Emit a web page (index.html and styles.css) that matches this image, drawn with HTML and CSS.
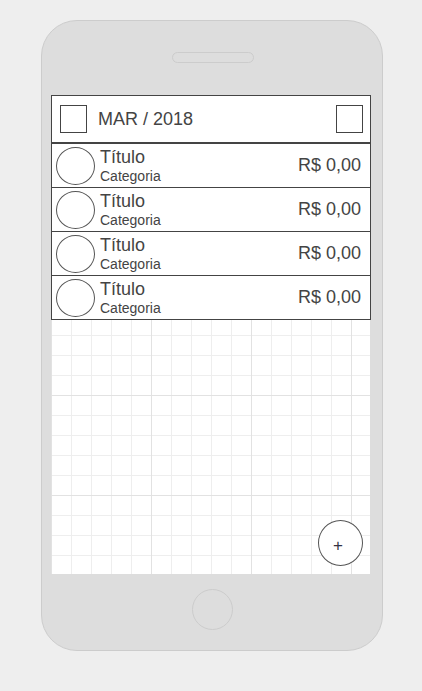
FILE: index.html
```html
<!DOCTYPE html>
<html lang="pt-BR">
<head>
<meta charset="utf-8">
<title>Finanças</title>
<link rel="stylesheet" href="styles.css">
</head>
<body>
<div class="phone">
  <div class="speaker"></div>
  <div class="screen">
    <div class="header">
      <div class="sq"></div>
      <div class="month">MAR / 2018</div>
      <div class="sq"></div>
    </div>
    <div class="list">
      <div class="row">
        <div class="avatar"></div>
        <div class="info"><div class="title">Título</div><div class="cat">Categoria</div></div>
        <div class="amount">R$ 0,00</div>
      </div>
      <div class="row">
        <div class="avatar"></div>
        <div class="info"><div class="title">Título</div><div class="cat">Categoria</div></div>
        <div class="amount">R$ 0,00</div>
      </div>
      <div class="row">
        <div class="avatar"></div>
        <div class="info"><div class="title">Título</div><div class="cat">Categoria</div></div>
        <div class="amount">R$ 0,00</div>
      </div>
      <div class="row">
        <div class="avatar"></div>
        <div class="info"><div class="title">Título</div><div class="cat">Categoria</div></div>
        <div class="amount">R$ 0,00</div>
      </div>
    </div>
    <div class="fab">+</div>
  </div>
  <div class="home"></div>
</div>
</body>
</html>
```
FILE: styles.css
```css
html, body {
  margin: 0;
  padding: 0;
}
body {
  background: #eeeeee;
  font-family: "Liberation Sans", Arial, sans-serif;
  color: #444444;
}
.phone {
  box-sizing: border-box;
  width: 342px;
  height: 631px;
  margin: 20px 0 0 41px;
  background: #dddddd;
  border: 1px solid #cccccc;
  border-radius: 36px;
  display: flex;
  flex-direction: column;
  padding-top: 31px;
}
.speaker {
  align-self: center;
  box-sizing: border-box;
  width: 82px;
  height: 11px;
  border: 1px solid #cccccc;
  border-radius: 6px;
  margin-left: 2px;
}
.screen {
  position: relative;
  box-sizing: border-box;
  width: 320px;
  height: 480px;
  margin: 32px 0 0 9px;
  overflow: hidden;
  background-color: #ffffff;
  background-image:
    linear-gradient(to right, #e2e2e2 1px, transparent 1px),
    linear-gradient(to bottom, #e2e2e2 1px, transparent 1px),
    linear-gradient(to right, #eeeeee 1px, transparent 1px),
    linear-gradient(to bottom, #eeeeee 1px, transparent 1px);
  background-size: 100px 100px, 100px 100px, 20px 20px, 20px 20px;
  box-shadow: inset -1px -1px 0 #dddddd;
}
.header {
  box-sizing: border-box;
  height: 48px;
  border: 1px solid #444444;
  background: #ffffff;
  display: flex;
  align-items: center;
  padding: 0 7px 0 8px;
}
.sq {
  box-sizing: border-box;
  width: 27px;
  height: 28px;
  border: 1px solid #444444;
}
.month {
  flex: 1;
  margin-left: 11px;
  font-size: 18px;
  line-height: 21px;
}
.list {
  border-bottom: 1px solid #444444;
}
.row {
  box-sizing: border-box;
  height: 44px;
  border: 1px solid #444444;
  border-bottom: 0;
  background: #ffffff;
  display: flex;
  align-items: center;
  padding: 0 9px 0 4px;
}
.avatar {
  box-sizing: border-box;
  width: 39px;
  height: 38px;
  border: 1px solid #555555;
  border-radius: 50%;
  flex: none;
}
.info {
  margin-left: 5px;
  display: flex;
  flex-direction: column;
}
.title {
  font-size: 18px;
  line-height: 21px;
}
.cat {
  font-size: 14px;
  line-height: 17px;
}
.amount {
  margin-left: auto;
  font-size: 18px;
  line-height: 21px;
}
.fab {
  position: absolute;
  right: 8px;
  bottom: 9px;
  box-sizing: border-box;
  width: 45px;
  height: 46px;
  padding: 4px 5px 0 0;
  border: 1px solid #555555;
  border-radius: 50%;
  background: #ffffff;
  display: flex;
  align-items: center;
  justify-content: center;
  font-size: 17px;
  line-height: 1;
  color: #333344;
}
.home {
  align-self: center;
  box-sizing: border-box;
  width: 41px;
  height: 41px;
  margin-top: 14px;
  border: 1px solid #cccccc;
  border-radius: 50%;
}
```
